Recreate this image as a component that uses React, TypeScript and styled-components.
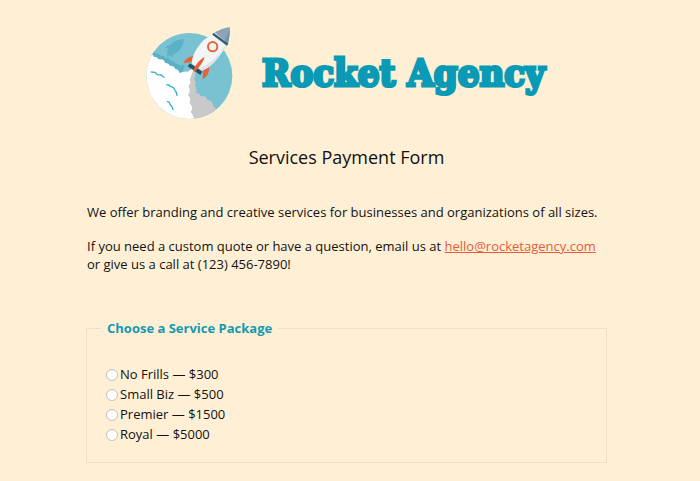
import React from "react";
import styled, { createGlobalStyle } from "styled-components";

const GlobalStyle = createGlobalStyle`
  * { box-sizing: border-box; }
  body {
    margin: 0;
    padding-right: 7px;
    background: #fff0d5;
    color: #111;
    font: 13px/18px "Open Sans", "Noto Sans", sans-serif;
  }
`;

const Page = styled.main`
  max-width: 521px;
  margin: 0 auto;
  padding: 20px 0 18px;
`;

const Header = styled.header`
  display: flex;
  justify-content: center;
  align-items: center;
  gap: 22px;
  padding-right: 8px;
`;

const Logo = styled.svg`
  width: 100px;
  height: 105px;
  flex: none;
`;

const Brand = styled.h1`
  margin: 0;
  color: #0a9ab5;
  font: bold 38px/48px "DejaVu Serif Condensed", "DejaVu Serif", serif;
  -webkit-text-stroke: 3px #0a9ab5;
  white-space: nowrap;
`;

const Title = styled.h2`
  margin: 20px 0 34px;
  font-size: 18px;
  line-height: 24px;
  font-weight: 400;
  text-align: center;
`;

const Paragraph = styled.p`
  margin: 0 1px 16px;
`;

const MailLink = styled.a`
  color: #e8593a;
  text-decoration: underline;
`;

const Packages = styled.fieldset`
  margin: 46px 0 0;
  padding: 27px 19px 18px;
  border: 1px solid #efe0c5;
`;

const Legend = styled.legend`
  margin-left: -5px;
  padding: 0 6px;
  color: #1399b4;
  font-weight: 700;
`;

const Option = styled.label`
  display: flex;
  align-items: center;
  gap: 2px;
  line-height: 20px;
`;

const Radio = styled.input`
  appearance: none;
  width: 12px;
  height: 12px;
  margin: 2px 0 0;
  border: 1px solid #c4c0bb;
  border-radius: 50%;
  background: #fff;
  &:checked {
    border: 4px solid #1399b4;
  }
`;

const packages = [
  { name: "No Frills", price: 300 },
  { name: "Small Biz", price: 500 },
  { name: "Premier", price: 1500 },
  { name: "Royal", price: 5000 },
];

function RocketLogo() {
  return (
    <Logo viewBox="0 0 300 315" role="img" aria-label="Rocket">
      <defs>
        <clipPath id="sky">
          <circle cx="148" cy="168" r="129" />
        </clipPath>
      </defs>
      <circle cx="148" cy="168" r="129" fill="#78c2d1" />
      <g clipPath="url(#sky)">
        <path
          fill="#5bb2c7"
          d="M132 58c-17-1-32 6-41 17-7 0-12 4-15 9l9 0c-3 6-4 12-3 18l-1 9 10-5 4 7 7-11c17-8 28-23 30-44z"
        />
        <path
          fill="#5bb2c7"
          d="M30 104q10-10 20-3 7-2 11 6 13-3 16 7 12-2 14 9 11-3 15 8 11-1 15 7 6-5 14-3l-8 22-46 4z"
        />
        <path
          fill="#c9c9ca"
          d="M158 149l-16 50-5 110h100l-9-36q1-12-9-13 2-17-17-21-4-14-19-10-4-9-15-10 4-12-3-22 4-11-2-18 3-16 5-30z"
        />
        <path
          fill="#fff"
          d="M5 108l33-4q3 9 12 8 3 7 13 6 10 0 12 11 10-2 15 8 13-1 16 11 9-2 13 12 12-7 24-5l20-14-14 39q6 10-4 18 9 13-1 28 11 9 4 22 14 15 4 28 9 10 13 28l-32 12H0z"
        />
        <g fill="none" stroke="#34b5c7" strokeWidth="4" strokeLinecap="round" strokeLinejoin="round">
          <path d="M34 156l11 1 7 7 12 1 8 7" />
          <path d="M80 195q6-3 11 5 10-1 13 9 6 6 7 17" />
          <path d="M82 245q7-1 8 9 7 4 9 15" />
        </g>
      </g>
      <path fill="#e96235" d="M161 107q-22 4-31 23l24-4 10 15z" />
      <path fill="#e96235" d="M207 140q4 22-19 38l1-24-15-6z" />
      <path fill="#285469" d="M150 130l37 25-6 10-38-26z" />
      <path
        fill="#f2f5f5"
        d="M217 43l44 33-13 18c-21 31-39 49-62 58l-31-21c0-20 14-48 36-71z"
      />
      <path fill="#dce5e9" d="M256 74l5 3-13 18c-21 30-38 48-62 57l-10-7c31-12 59-34 80-71z" />
      <path fill="#8ba3bc" d="M224 37q23-13 45-16 2 26-5 50z" />
      <path fill="#7693ad" d="M269 21q2 26-5 50l-10-8q12-19 15-42z" />
      <path fill="#315b70" d="M221 38l44 33-4 6-44-33z" />
      <circle cx="218" cy="80" r="14" fill="#edf4f3" stroke="#e96235" strokeWidth="6" />
      <path fill="#e96235" d="M194 110q-4 20-30 45l-5-4q13-29 35-41z" />
    </Logo>
  );
}

export default function App() {
  return (
    <>
      <GlobalStyle />
      <Page>
        <Header>
          <RocketLogo />
          <Brand>Rocket Agency</Brand>
        </Header>
        <Title>Services Payment Form</Title>
        <Paragraph>
          We offer branding and creative services for businesses and organizations of all sizes.
        </Paragraph>
        <Paragraph>
          If you need a custom quote or have a question, email us at{" "}
          <MailLink href="mailto:hello@rocketagency.com">hello@rocketagency.com</MailLink>
          <br />
          or give us a call at (123) 456-7890!
        </Paragraph>
        <Packages>
          <Legend>Choose a Service Package</Legend>
          {packages.map(({ name, price }) => (
            <Option key={name}>
              <Radio type="radio" name="package" value={name} />
              {name} — ${price}
            </Option>
          ))}
        </Packages>
      </Page>
    </>
  );
}
